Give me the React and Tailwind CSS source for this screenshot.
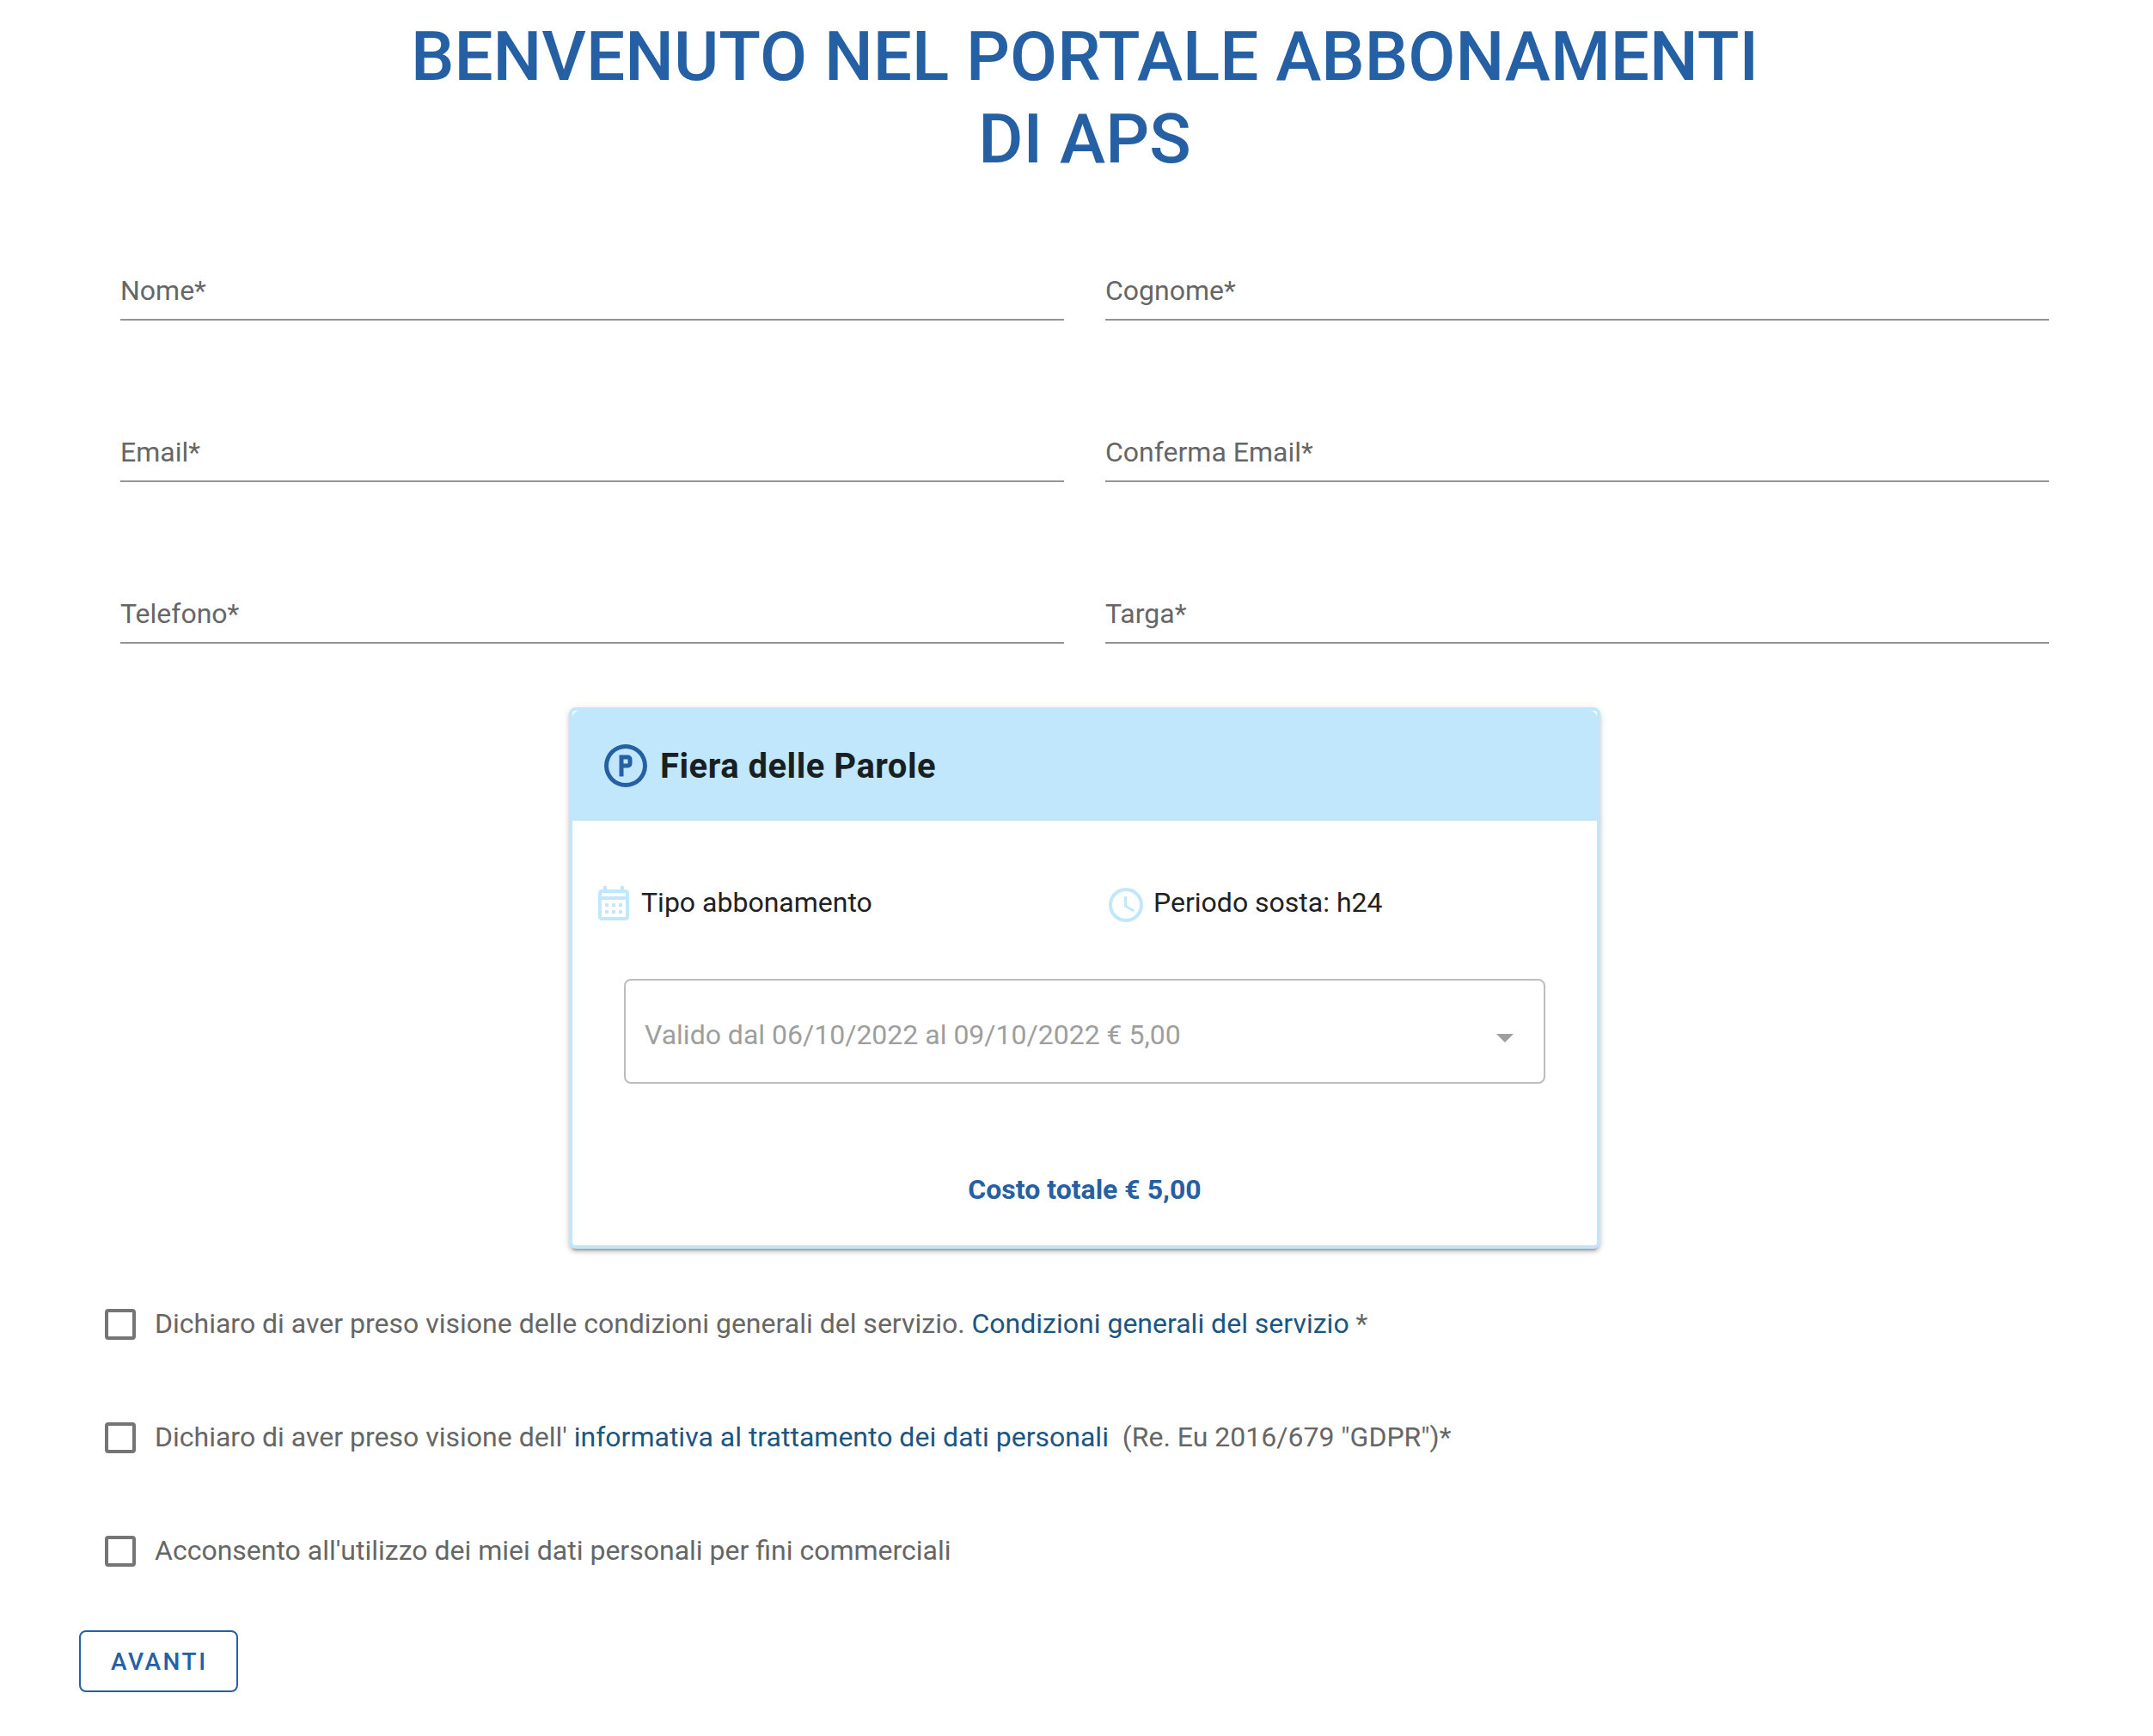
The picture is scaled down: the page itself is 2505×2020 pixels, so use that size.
const FIELDS = [
  { id: 'nome', label: 'Nome*', type: 'text' },
  { id: 'cognome', label: 'Cognome*', type: 'text' },
  { id: 'email', label: 'Email*', type: 'email' },
  { id: 'conferma-email', label: 'Conferma Email*', type: 'email' },
  { id: 'telefono', label: 'Telefono*', type: 'tel' },
  { id: 'targa', label: 'Targa*', type: 'text' },
];

const ICONS = {
  parking:
    'M9,7H13A2,2 0 0,1 15,9V11A2,2 0 0,1 13,13H11V17H9V7M11,9V11H13V9H11M12,2A10,10 0 0,1 22,12A10,10 0 0,1 12,22A10,10 0 0,1 2,12A10,10 0 0,1 12,2M12,4A8,8 0 0,0 4,12A8,8 0 0,0 12,20A8,8 0 0,0 20,12A8,8 0 0,0 12,4Z',
  calendar:
    'M7 11H9V13H7V11M21 5V19C21 20.11 20.11 21 19 21H5C3.89 21 3 20.1 3 19V5C3 3.9 3.9 3 5 3H6V1H8V3H16V1H18V3H19C20.11 3 21 3.9 21 5M5 5V7H19V5H5M19 19V9H5V19H19M15 13V11H17V13H15M11 13V11H13V13H11M7 15H9V17H7V15M15 17V15H17V17H15M11 17V15H13V17H11Z',
  clock:
    'M12,20A8,8 0 0,0 20,12A8,8 0 0,0 12,4A8,8 0 0,0 4,12A8,8 0 0,0 12,20M12,2A10,10 0 0,1 22,12A10,10 0 0,1 12,22C6.47,22 2,17.5 2,12A10,10 0 0,1 12,2M12.5,7V12.25L17,14.92L16.25,16.15L11,13V7H12.5Z',
};

const Icon = ({ path, className }) => (
  <svg viewBox="0 0 24 24" fill="currentColor" aria-hidden="true" className={className}>
    <path d={path} />
  </svg>
);

const Field = ({ id, label, type }) => (
  <div className="relative h-28">
    <input
      id={id}
      name={id}
      type={type}
      placeholder=" "
      className="peer w-full h-full pt-8 bg-transparent border-b-2 border-[#949494] outline-none"
    />
    {/* Floating label, moves up once the field has a value */}
    <label
      htmlFor={id}
      className="absolute left-0 bottom-[15px] leading-10 text-[#666666] pointer-events-none peer-focus:bottom-16 peer-[:not(:placeholder-shown)]:bottom-16"
    >
      {label}
    </label>
  </div>
);

const Consent = ({ id, children }) => (
  <div className="flex items-center gap-[22px] h-10">
    <input
      id={id}
      type="checkbox"
      className="appearance-none shrink-0 size-9 rounded border-4 border-[#757575] checked:bg-[#2660a4] checked:border-[#2660a4]"
    />
    <label htmlFor={id} className="pb-0.5 leading-10 text-[#666666]">
      {children}
    </label>
  </div>
);

const SubscriptionCard = () => (
  <section className="w-full max-w-[1200px] mx-auto bg-white rounded-lg border-4 border-[#c1e7fd] shadow-[0_6px_2px_-4px_rgba(0,0,0,0.2),0_4px_4px_0_rgba(0,0,0,0.14),0_2px_10px_0_rgba(0,0,0,0.12)]">
    <header className="flex items-center gap-2.5 h-32 px-8 bg-[#c1e7fd] rounded-t-lg">
      <Icon path={ICONS.parking} className="size-[60px] text-[#2660a4]" />
      <h2 className="pt-0.5 text-[40px] leading-[60px] font-bold tracking-[0.0125em] text-[#1a1f22]">Fiera delle Parole</h2>
    </header>

    <div className="grid grid-cols-2 pt-[74px] text-[#212121]">
      <div className="flex items-center gap-2 px-6">
        <Icon path={ICONS.calendar} className="size-12 text-[#c1e7fd]" />
        <label htmlFor="tipo" className="pb-1.5 leading-10">Tipo abbonamento</label>
      </div>
      <div className="flex items-center gap-2 px-6">
        <Icon path={ICONS.clock} className="size-12 text-[#c1e7fd]" />
        <span className="pb-1.5 leading-10">Periodo sosta: h24</span>
      </div>
    </div>

    <div className="relative mx-[60px] mt-[62px]">
      <select
        id="tipo"
        disabled
        className="appearance-none w-full h-[122px] pl-[22px] pr-20 pt-2 bg-white rounded-lg border-2 border-[#bdbdbd] text-[#9e9e9e] opacity-100"
      >
        <option>Valido dal 06/10/2022 al 09/10/2022 € 5,00</option>
      </select>
      <svg viewBox="0 0 20 10" fill="currentColor" aria-hidden="true" className="absolute right-[37px] top-16 w-5 h-2.5 text-[#9e9e9e]">
        <path d="M0 0H20L10 10Z" />
      </svg>
    </div>

    <p className="mt-[103px] mb-[45px] text-center font-bold leading-10 text-[#2660a4]">Costo totale € 5,00</p>
  </section>
);

export default function App() {
  return (
    <main className="min-h-screen bg-white pl-[92px] pr-[73px] pt-[18px] pb-12 font-[Roboto,sans-serif] text-[32px] leading-[48px]">
      <h1 className="max-w-[1600px] mx-auto text-center text-[80px] leading-[96px] font-medium text-[#2660a4]">
        BENVENUTO NEL PORTALE ABBONAMENTI DI APS
      </h1>

      <form>
        <div className="grid grid-cols-2 gap-x-12 gap-y-[76px] px-12 pt-[51px] pb-[74px]">
          {FIELDS.map((field) => (
            <Field key={field.id} {...field} />
          ))}
        </div>

        <SubscriptionCard />

        <div className="flex flex-col gap-[92px] px-[30px] pt-[68px]">
          <Consent id="condizioni">
            Dichiaro di aver preso visione delle condizioni generali del servizio.{' '}
            <a href="#condizioni-generali" className="text-[#1a5680]">Condizioni generali del servizio</a> *
          </Consent>
          <Consent id="privacy">
            Dichiaro di aver preso visione dell'{' '}
            <a href="#informativa" className="text-[#1a5680]">informativa al trattamento dei dati personali</a>
            &nbsp; (Re. Eu 2016/679 "GDPR")*
          </Consent>
          <Consent id="marketing">Acconsento all'utilizzo dei miei dati personali per fini commerciali</Consent>
        </div>

        <button
          type="submit"
          className="mt-[72px] h-[72px] pl-[35px] pr-[33px] pt-0.5 rounded-lg border-2 border-[#2660a4] text-[28px] leading-9 font-medium tracking-[0.09em] text-[#2660a4]"
        >
          AVANTI
        </button>
      </form>
    </main>
  );
}
